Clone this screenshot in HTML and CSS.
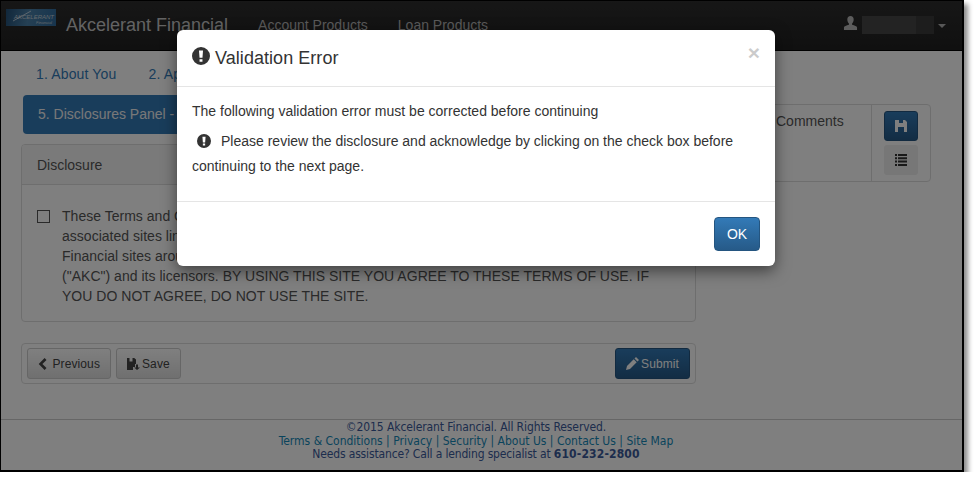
FILE: index.html
```html
<!DOCTYPE html>
<html lang="en">
<head>
<meta charset="utf-8">
<title>Akcelerant Financial</title>
<link rel="stylesheet" href="styles.css">
</head>
<body>
<svg class="defs" width="0" height="0" aria-hidden="true">
  <symbol id="i-excl" viewBox="0 0 16 16"><path fill-rule="evenodd" d="M8 0a8 8 0 1 1 0 16A8 8 0 0 1 8 0zM6.200 3l.5 6.600h2.600L9.800 3zM6.700 10.800v2.400h2.600v-2.400z"/></symbol>
  <symbol id="i-user" viewBox="0 0 16 15"><path d="M8 0c2.200 0 3.400 1.600 3.400 3.800 0 1.800-.7 3.400-1.700 4.300v1.300c2.600.7 5.300 1.600 5.300 2.900V15H1v-2.700c0-1.300 2.700-2.200 5.300-2.900V8.100C5.300 7.200 4.600 5.600 4.600 3.800 4.600 1.600 5.800 0 8 0z"/></symbol>
  <symbol id="i-floppy" viewBox="0 0 12 12"><path d="M0 0h4v3h4V0h2l2 2v10H9V7H3v5H0z"/></symbol>
  <symbol id="i-list" viewBox="0 0 12 12"><path d="M0 0h2v2H0zM3 0h9v2H3zM0 3.300h2v2H0zM3 3.300h9v2H3zM0 6.600h2v2H0zM3 6.600h9v2H3zM0 10h2v2H0zM3 10h9v2H3z"/></symbol>
  <symbol id="i-chev" viewBox="0 0 9 12"><path d="M6.600 0 8.500 1.900 4.400 6l4.100 4.100L6.600 12 .7 6z"/></symbol>
  <symbol id="i-fsave" viewBox="0 0 13 12"><path d="M0 0h2.500v3.500h3V0h1.700L9 1.500V6H8v3H6v3H0zM9 6.500h2v3h2L10 12 7.200 9.500H9z"/></symbol>
  <symbol id="i-pencil" viewBox="0 0 13 13"><path d="M10 0l3 3-1.500 1.500-3-3zM7.700 2.300l3 3L4 12l-4 1 1-4z"/></symbol>
</svg>

<div class="shot">
  <header class="nav">
    <div class="logo">
      <svg class="logo-streak" viewBox="0 0 50 17"><path d="M7 12 25 2" stroke="#e8eef2" stroke-width=".7" fill="none"/></svg>
      <span class="logo-name">AKCELERANT</span><span class="logo-sub">Financial</span>
    </div>
    <span class="brand">Akcelerant Financial</span>
    <a class="nav-link">Account Products</a>
    <a class="nav-link">Loan Products</a>
    <div class="nav-user">
      <svg class="ic-user"><use href="#i-user"/></svg>
      <span class="redact"><span class="redact-end"></span></span>
      <span class="caret"></span>
    </div>
  </header>

  <main class="main">
    <nav class="steps">
      <a>1. About You</a>
      <a>2. Application</a>
      <a>3. Products</a>
      <a>4. Funding</a>
      <a>5. Disclosures</a>
    </nav>
    <div class="columns">
      <section class="left">
        <div class="banner">5. Disclosures Panel - Please Review</div>
        <div class="panel">
          <div class="panel-head">Disclosure</div>
          <div class="panel-body">
            <span class="check"></span>
            <p class="terms">These Terms and Conditions of Use apply to the Akcelerant Financial site and<br>
            associated sites linked to it. The content and materials on the Akcelerant<br>
            Financial sites around the world are the property of Akcelerant Financial<br>
            ("AKC") and its licensors. BY USING THIS SITE YOU AGREE TO THESE TERMS OF USE. IF<br>
            YOU DO NOT AGREE, DO NOT USE THE SITE.</p>
          </div>
        </div>
        <div class="actions">
          <button class="btn"><svg class="ic-chev"><use href="#i-chev"/></svg>Previous</button>
          <button class="btn"><svg class="ic-fsave"><use href="#i-fsave"/></svg>Save</button>
          <button class="btn btn-primary"><svg class="ic-pencil"><use href="#i-pencil"/></svg>Submit</button>
        </div>
      </section>
      <aside class="side">
        <div class="side-text">Comments</div>
        <div class="side-tools">
          <button class="tool tool-on"><svg class="ic-tool"><use href="#i-floppy"/></svg></button>
          <button class="tool"><svg class="ic-tool"><use href="#i-list"/></svg></button>
        </div>
      </aside>
    </div>
  </main>

  <footer class="foot">
    <div class="foot-copy">©2015 Akcelerant Financial. All Rights Reserved.</div>
    <div class="foot-links"><a>Terms &amp; Conditions</a> | <a>Privacy</a> | <a>Security</a> | <a>About Us</a> | <a>Contact Us</a> | <a>Site Map</a></div>
    <div class="foot-help">Needs assistance? Call a lending specialist at <b>610-232-2800</b></div>
  </footer>

  <div class="backdrop"></div>

  <div class="modal">
    <div class="modal-head">
      <svg class="ic-title"><use href="#i-excl"/></svg>
      <h4 class="modal-title">Validation Error</h4>
      <span class="close">×</span>
    </div>
    <div class="modal-body">
      <p class="lead">The following validation error must be corrected before continuing</p>
      <p class="err"><svg class="ic-err"><use href="#i-excl"/></svg>Please review the disclosure and acknowledge by clicking on the check box before continuing to the next page.</p>
    </div>
    <div class="modal-foot"><button class="ok">OK</button></div>
  </div>
</div>
</body>
</html>
```
FILE: styles.css
```css
* { box-sizing: border-box; }
html, body { margin: 0; background: #fff; }
body { font-family: "Liberation Sans", Arial, sans-serif; font-size: 14px; color: #333; }
.defs { display: block; height: 0; }
svg { fill: currentColor; flex: none; }

.shot {
  position: relative;
  width: 964px;
  height: 472px;
  border: 1px solid #000;
  border-width: 1px 2px 2px 1px;
  background: #fff;
  box-shadow: 4px 4px 5px rgba(0, 0, 0, .45);
  overflow: hidden;
  display: flex;
  flex-direction: column;
}

/* Navbar */
.nav {
  height: 50px;
  flex: none;
  display: flex;
  align-items: flex-start;
  background: linear-gradient(#2e2e2e, #202020);
  border-bottom: 1px solid #000;
  padding-left: 5px;
}
.logo {
  position: relative;
  width: 50px;
  height: 17px;
  margin: 8px 10px 0 0;
  background: linear-gradient(100deg, #234f76, #4a80a8 45%, #2f6a9c);
  color: #c4d0d8;
  display: flex;
  flex-direction: column;
  align-items: flex-end;
  padding: 5px 2px 0 0;
  font-size: 6px;
  line-height: 6px;
  font-style: italic;
  overflow: hidden;
}
.logo-streak { position: absolute; left: 0; top: 0; width: 50px; height: 17px; }
.logo-sub { font-size: 4px; line-height: 5px; margin-right: 2px; }
.brand { font-size: 18px; line-height: 20px; margin-top: 14px; color: #c6c6c6; }
.nav-link { font-size: 14px; line-height: 20px; margin: 14px 0 0 30px; color: #b4b4b4; }
.nav-user { margin-left: auto; margin-right: 16px; display: flex; align-items: flex-start; color: #9d9d9d; }
.ic-user { width: 15px; height: 14px; margin: 15px 4px 0 0; color: #b8b8b8; }
.redact { display: block; width: 72px; height: 18px; margin-top: 15px; background: #464646; position: relative; }
.redact-end { position: absolute; right: 0; top: 0; width: 18px; height: 18px; background: #3a3a3a; }
.caret { width: 0; height: 0; margin: 23px 0 0 4px; border-top: 4px solid #b0b0b0; border-left: 4px solid transparent; border-right: 4px solid transparent; }

/* Main */
.main { flex: none; padding: 0 31px 0 20px; }
.steps { height: 44px; padding: 13px 0 0 15px; display: flex; gap: 32px; line-height: 20px; letter-spacing: .15px; color: #337ab7; }
.columns { display: flex; align-items: flex-start; gap: 17px; }
.left { width: 675px; flex: none; }
.banner {
  height: 39px;
  margin-left: 2px;
  padding: 0 15px;
  line-height: 39px;
  background: #337ab7;
  color: #f0f0f0;
  border-radius: 4px;
}
.panel { margin-top: 10px; border: 1px solid #ddd; border-radius: 4px; background: #fff; height: 178px; color: #555; }
.panel-head { height: 40px; padding: 0 15px; line-height: 40px; background: #f5f5f5; border-bottom: 1px solid #ddd; border-radius: 3px 3px 0 0; }
.panel-body { display: flex; padding: 21px 15px 0; }
.check { width: 13px; height: 13px; margin: 4px 12px 0 0; border: 1px solid #555; background: #fff; flex: none; }
.terms { margin: 0; line-height: 20px; white-space: nowrap; letter-spacing: .02px; }

.actions { margin-top: 21px; height: 41px; padding: 4px 5px; border: 1px solid #ddd; border-radius: 4px; display: flex; gap: 5px; }
.btn {
  height: 31px;
  padding: 0 10px;
  display: flex;
  align-items: center;
  font: 12px "Liberation Sans", Arial, sans-serif;
  letter-spacing: .1px;
  color: #444;
  background: linear-gradient(#fff, #e0e0e0);
  border: 1px solid #ccc;
  border-radius: 3px;
}
.btn-primary { margin-left: auto; color: #fff; background: linear-gradient(#337ab7, #265a88); border-color: #245580; }
.ic-chev { width: 9px; height: 12px; margin-right: 5.500px; }
.ic-fsave { width: 13px; height: 12px; margin-right: 2px; }
.ic-pencil { width: 13px; height: 13px; margin-right: 2px; }

.side { width: 220px; height: 78px; margin-top: 9px; border: 1px solid #ddd; border-radius: 4px; display: flex; }
.side-text { flex: 1; padding: 6px 0 0 62px; line-height: 20px; color: #555; }
.side-tools { width: 59px; border-left: 1px solid #ddd; padding: 6px 0 0 12px; display: flex; flex-direction: column; gap: 4px; }
.tool { width: 34px; height: 30px; padding: 0; display: flex; align-items: center; justify-content: center; background: #eee; color: #333; border: 0; border-radius: 3px; }
.tool-on { background: linear-gradient(#337ab7, #265a88); border: 1px solid #245580; color: #fff; }
.ic-tool { width: 12px; height: 12px; }

/* Footer */
.foot {
  margin-top: 35px;
  border-top: 1px solid #ccc;
  padding: 1px 11px 0 0;
  text-align: center;
  font: 12px/13.500px "DejaVu Sans", sans-serif;
  font-stretch: condensed;
  color: #3a5a9a;
}
.foot-copy { letter-spacing: -.1px; }
.foot-links { color: #1488b8; }
.foot-help { letter-spacing: -.15px; }
.foot b { font-size: 12px; letter-spacing: .15px; }

/* Overlay */
.backdrop { position: absolute; inset: 0; background: rgba(0, 0, 0, .5); }
.modal {
  position: absolute;
  left: 176px;
  top: 29px;
  width: 598px;
  height: 236px;
  background: #fff;
  border-radius: 6px;
  box-shadow: 0 5px 15px rgba(0, 0, 0, .5);
  display: flex;
  flex-direction: column;
}
.modal-head { height: 57px; flex: none; padding: 0 15px; display: flex; align-items: center; border-bottom: 1px solid #e5e5e5; position: relative; }
.ic-title { width: 18px; height: 18px; margin: -4px 5px 0 0; }
.modal-title { margin: 0; font-size: 18px; font-weight: 400; line-height: 20px; letter-spacing: .05px; }
.close { position: absolute; right: 15px; top: 12px; font-size: 21px; line-height: 21px; font-weight: 700; color: #000; opacity: .2; }
.modal-body { height: 115px; flex: none; padding: 14px 15px; border-bottom: 1px solid #e5e5e5; }
.lead { margin: 0 0 8px; line-height: 20px; }
.err { margin: 0; line-height: 25px; }
.ic-err { width: 14px; height: 14px; margin: 0 10px 0 5px; vertical-align: -2px; }
.modal-foot { flex: 1; padding: 15px; display: flex; justify-content: flex-end; }
.ok { width: 46px; height: 34px; padding: 0; font: 14px "Liberation Sans", Arial, sans-serif; color: #fff; background: linear-gradient(#337ab7, #265a88); border: 1px solid #245580; border-radius: 4px; }
```
